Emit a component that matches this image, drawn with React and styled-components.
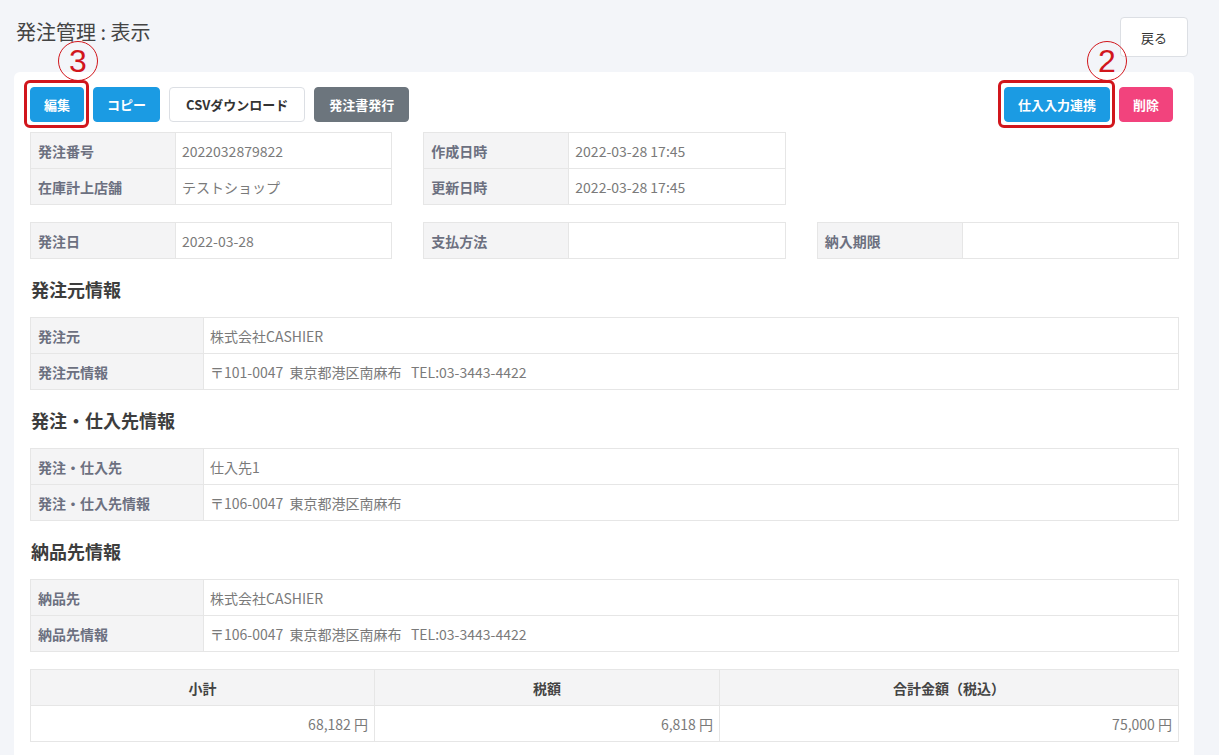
import React from 'react'
import styled, { createGlobalStyle } from 'styled-components'

const GlobalStyle = createGlobalStyle`
  body {
    margin: 0;
    background: #f3f5f9;
    font-family: "Noto Sans CJK JP", "Noto Sans", sans-serif;
    color: #444;
  }
`

const Page = styled.div`
  width: 1219px;
  height: 755px;
  overflow: hidden;
`

const Header = styled.div`
  display: flex;
  justify-content: space-between;
  align-items: flex-start;
  padding: 17px 31px 0 16px;
  height: 55px;
`

const Title = styled.h1`
  margin: 0;
  margin-top: 1px;
  font-size: 20px;
  font-weight: 400;
  color: #444;
  line-height: 28px;
`

const BackButton = styled.button`
  width: 68px;
  height: 40px;
  background: #fff;
  border: 1px solid #dcdfe4;
  border-radius: 4px;
  font-family: inherit;
  font-size: 13px;
  color: #333;
`

const Card = styled.div`
  margin-left: 14px;
  width: 1180px;
  background: #fff;
  border-radius: 6px 6px 0 0;
  padding: 15px 15px 20px 16px;
  box-sizing: border-box;
  min-height: 700px;
`

const Toolbar = styled.div`
  display: flex;
  justify-content: space-between;
  padding-right: 6px;
`

const ButtonGroup = styled.div`
  display: flex;
  gap: 9px;
`

const variants = {
  blue: { bg: '#1b9be3', fg: '#fff', border: '#1b9be3', pad: 13 },
  gray: { bg: '#6c757d', fg: '#fff', border: '#6c757d', pad: 14 },
  pink: { bg: '#f2437d', fg: '#fff', border: '#f2437d', pad: 13 },
  white: { bg: '#fff', fg: '#333', border: '#dcdfe4', pad: 16 },
}

const Button = styled.button`
  height: 35px;
  padding: 0 ${p => variants[p.$variant].pad}px;
  border-radius: 4px;
  border: 1px solid ${p => variants[p.$variant].border};
  background: ${p => variants[p.$variant].bg};
  color: ${p => variants[p.$variant].fg};
  font-family: inherit;
  font-size: 13px;
  font-weight: 700;
  white-space: nowrap;
`

const Marked = styled.span`
  position: relative;
  display: inline-flex;
  &::after {
    content: '';
    position: absolute;
    top: -7px;
    bottom: -6px;
    left: -6px;
    right: -5px;
    border: 3px solid #d1161c;
    border-radius: 6px;
    pointer-events: none;
  }
`

const Badge = styled.span`
  position: absolute;
  top: -46px;
  left: ${p => p.$left}px;
  width: 38px;
  height: 38px;
  border: 1.5px solid #d1161c;
  border-radius: 50%;
  color: #d1161c;
  font-family: "Liberation Sans", sans-serif;
  font-size: 32px;
  line-height: 39px;
  text-align: center;
`

const InfoGrid = styled.div`
  display: grid;
  grid-template-columns: repeat(3, 1fr);
  column-gap: 31px;
  margin-top: ${p => p.$top}px;
`

const Table = styled.table`
  width: 100%;
  border-collapse: collapse;
  table-layout: fixed;
  font-size: 14px;
  line-height: 20px;
  margin-top: ${p => p.$top || 0}px;
`

const Row = styled.tr`
  height: 36px;
`

const Label = styled.th`
  width: ${p => p.$w}px;
  box-sizing: border-box;
  padding: 0 7px;
  background: #f4f4f5;
  border: 1px solid #e6e6e6;
  color: #6c7080;
  font-weight: 700;
  text-align: left;
`

const Value = styled.td`
  padding: 0 6px;
  border: 1px solid #e6e6e6;
  color: #7a7a7a;
  text-align: ${p => p.$align || 'left'};
  white-space: pre;
`

const HeadCell = styled.th`
  width: ${p => (p.$w ? `${p.$w}px` : 'auto')};
  box-sizing: border-box;
  padding: 0;
  background: #f4f4f5;
  border: 1px solid #e6e6e6;
  color: #444;
  font-weight: 700;
  text-align: center;
`

const SectionTitle = styled.h2`
  margin: 18px 0 16px 1px;
  font-size: 18px;
  line-height: 24px;
  font-weight: 700;
  color: #3d3d3d;
`

function InfoTable({ rows, w = 145 }) {
  return (
    <Table>
      <tbody>
        {rows.map(([k, v]) => (
          <Row key={k}>
            <Label $w={w}>{k}</Label>
            <Value>{v}</Value>
          </Row>
        ))}
      </tbody>
    </Table>
  )
}

const sections = [
  {
    title: '発注元情報',
    rows: [
      ['発注元', '株式会社CASHIER'],
      ['発注元情報', '〒101-0047  東京都港区南麻布   TEL:03-3443-4422'],
    ],
  },
  {
    title: '発注・仕入先情報',
    rows: [
      ['発注・仕入先', '仕入先1'],
      ['発注・仕入先情報', '〒106-0047  東京都港区南麻布'],
    ],
  },
  {
    title: '納品先情報',
    rows: [
      ['納品先', '株式会社CASHIER'],
      ['納品先情報', '〒106-0047  東京都港区南麻布   TEL:03-3443-4422'],
    ],
  },
]

export default function App() {
  return (
    <Page>
      <GlobalStyle />
      <Header>
        <Title>発注管理 : 表示</Title>
        <BackButton>戻る</BackButton>
      </Header>
      <Card>
        <Toolbar>
          <ButtonGroup>
            <Marked>
              <Button $variant="blue">編集</Button>
              <Badge $left={28}>3</Badge>
            </Marked>
            <Button $variant="blue">コピー</Button>
            <Button $variant="white">CSVダウンロード</Button>
            <Button $variant="gray">発注書発行</Button>
          </ButtonGroup>
          <ButtonGroup>
            <Marked>
              <Button $variant="blue">仕入入力連携</Button>
              <Badge $left={83}>2</Badge>
            </Marked>
            <Button $variant="pink">削除</Button>
          </ButtonGroup>
        </Toolbar>

        <InfoGrid $top={10}>
          <InfoTable rows={[['発注番号', '2022032879822'], ['在庫計上店舗', 'テストショップ']]} />
          <InfoTable rows={[['作成日時', '2022-03-28 17:45'], ['更新日時', '2022-03-28 17:45']]} />
        </InfoGrid>
        <InfoGrid $top={17}>
          <InfoTable rows={[['発注日', '2022-03-28']]} />
          <InfoTable rows={[['支払方法', '']]} />
          <InfoTable rows={[['納入期限', '']]} />
        </InfoGrid>

        {sections.map(s => (
          <React.Fragment key={s.title}>
            <SectionTitle>{s.title}</SectionTitle>
            <InfoTable rows={s.rows} w={173} />
          </React.Fragment>
        ))}

        <Table $top={17}>
          <thead>
            <Row>
              <HeadCell $w={344}>小計</HeadCell>
              <HeadCell $w={345}>税額</HeadCell>
              <HeadCell>合計金額（税込）</HeadCell>
            </Row>
          </thead>
          <tbody>
            <Row>
              <Value $align="right">68,182 円</Value>
              <Value $align="right">6,818 円</Value>
              <Value $align="right">75,000 円</Value>
            </Row>
          </tbody>
        </Table>
      </Card>
    </Page>
  )
}
